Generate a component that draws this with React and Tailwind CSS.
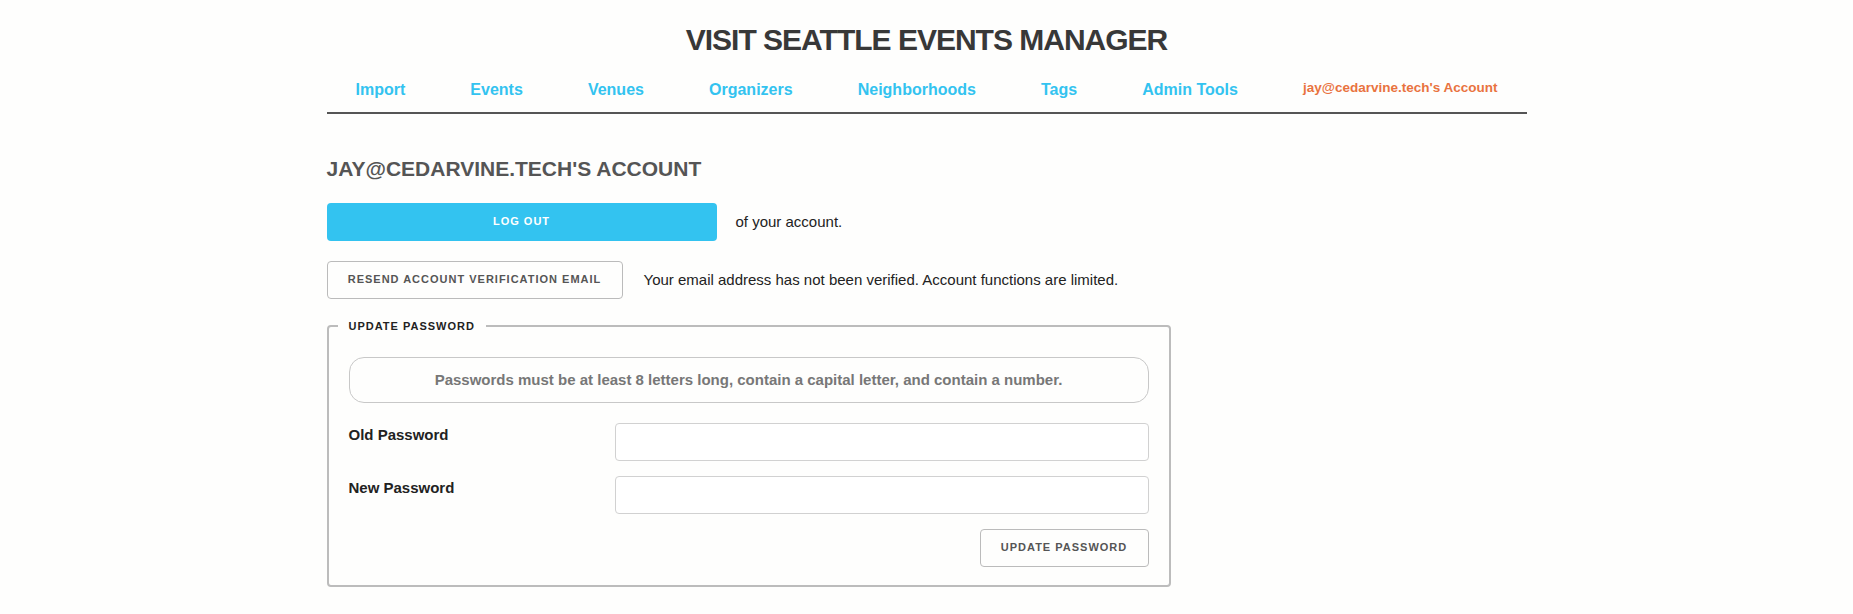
import React from "react";

const navItems = ["Import", "Events", "Venues", "Organizers", "Neighborhoods", "Tags", "Admin Tools"];

// Header with title and nav
function Header() {
  return (
    <header className="pt-[22px]">
      <h1 className="text-center text-[30px] leading-[36px] font-bold tracking-[-1px] text-[#383838]">
        VISIT SEATTLE EVENTS MANAGER
      </h1>
      <nav className="mt-[20px] flex items-start justify-between border-b-2 border-[#555] px-[29px] pb-[10px]">
        {navItems.map((item) => (
          <a key={item} href="#" className="text-[16px] leading-[24px] font-bold text-[#33c3f0]">
            {item}
          </a>
        ))}
        <a href="#" className="text-[13.5px] leading-[20px] font-bold text-[#e9733f]">
          jay@cedarvine.tech's Account
        </a>
      </nav>
    </header>
  );
}

function PasswordRow({ label, first }) {
  return (
    <div className={`grid grid-cols-3 ${first ? "" : "mt-[15px]"}`}>
      <label className="text-[15px] leading-[24px] font-bold text-[#222]">{label}</label>
      <input
        type="password"
        className="col-span-2 h-[38px] rounded-[4px] border border-[#d1d1d1] bg-white px-[10px] outline-none"
      />
    </div>
  );
}

function UpdatePassword() {
  return (
    <fieldset className="mt-[18px] w-[844px] rounded-[4px] border-2 border-[#bcbcbc] px-[20px] pt-[22px] pb-[18px]">
      <legend className="-ml-[11px] px-[11px] text-[11px] leading-[18px] font-bold tracking-[1px] text-[#222]">
        UPDATE PASSWORD
      </legend>
      <div className="flex h-[46px] items-center justify-center rounded-[15px] border border-[#c8c8c8] text-[15px] font-bold text-[#777]">
        Passwords must be at least 8 letters long, contain a capital letter, and contain a number.
      </div>
      <div className="mt-[20px]">
        <PasswordRow label="Old Password" first />
        <PasswordRow label="New Password" />
      </div>
      <div className="mt-[15px] flex justify-end">
        <button className="h-[38px] w-[169px] rounded-[4px] border border-[#bbb] text-[11px] font-bold tracking-[1px] text-[#555]">
          UPDATE PASSWORD
        </button>
      </div>
    </fieldset>
  );
}

export default function App() {
  return (
    <div className="min-h-screen bg-[#fefefd] font-['Liberation_Sans',Arial,sans-serif] text-[15px] leading-[1.6] text-[#222]">
      <div className="mx-auto w-[1200px]">
        <Header />
        <main>
          <h2 className="mt-[42px] text-[21px] leading-[26px] font-bold text-[#555]">
            JAY@CEDARVINE.TECH'S ACCOUNT
          </h2>

          <div className="mt-[21px] flex items-center gap-[19px]">
            <button className="h-[38px] w-[390px] rounded-[4px] bg-[#33c3f0] text-[11px] font-bold tracking-[1px] text-white">
              LOG OUT
            </button>
            <span>of your account.</span>
          </div>

          <div className="mt-[20px] flex items-center gap-[21px]">
            <button className="h-[38px] w-[296px] rounded-[4px] border border-[#bbb] text-[11px] font-bold tracking-[1px] text-[#555]">
              RESEND ACCOUNT VERIFICATION EMAIL
            </button>
            <span>Your email address has not been verified. Account functions are limited.</span>
          </div>

          <UpdatePassword />
        </main>
      </div>
    </div>
  );
}
